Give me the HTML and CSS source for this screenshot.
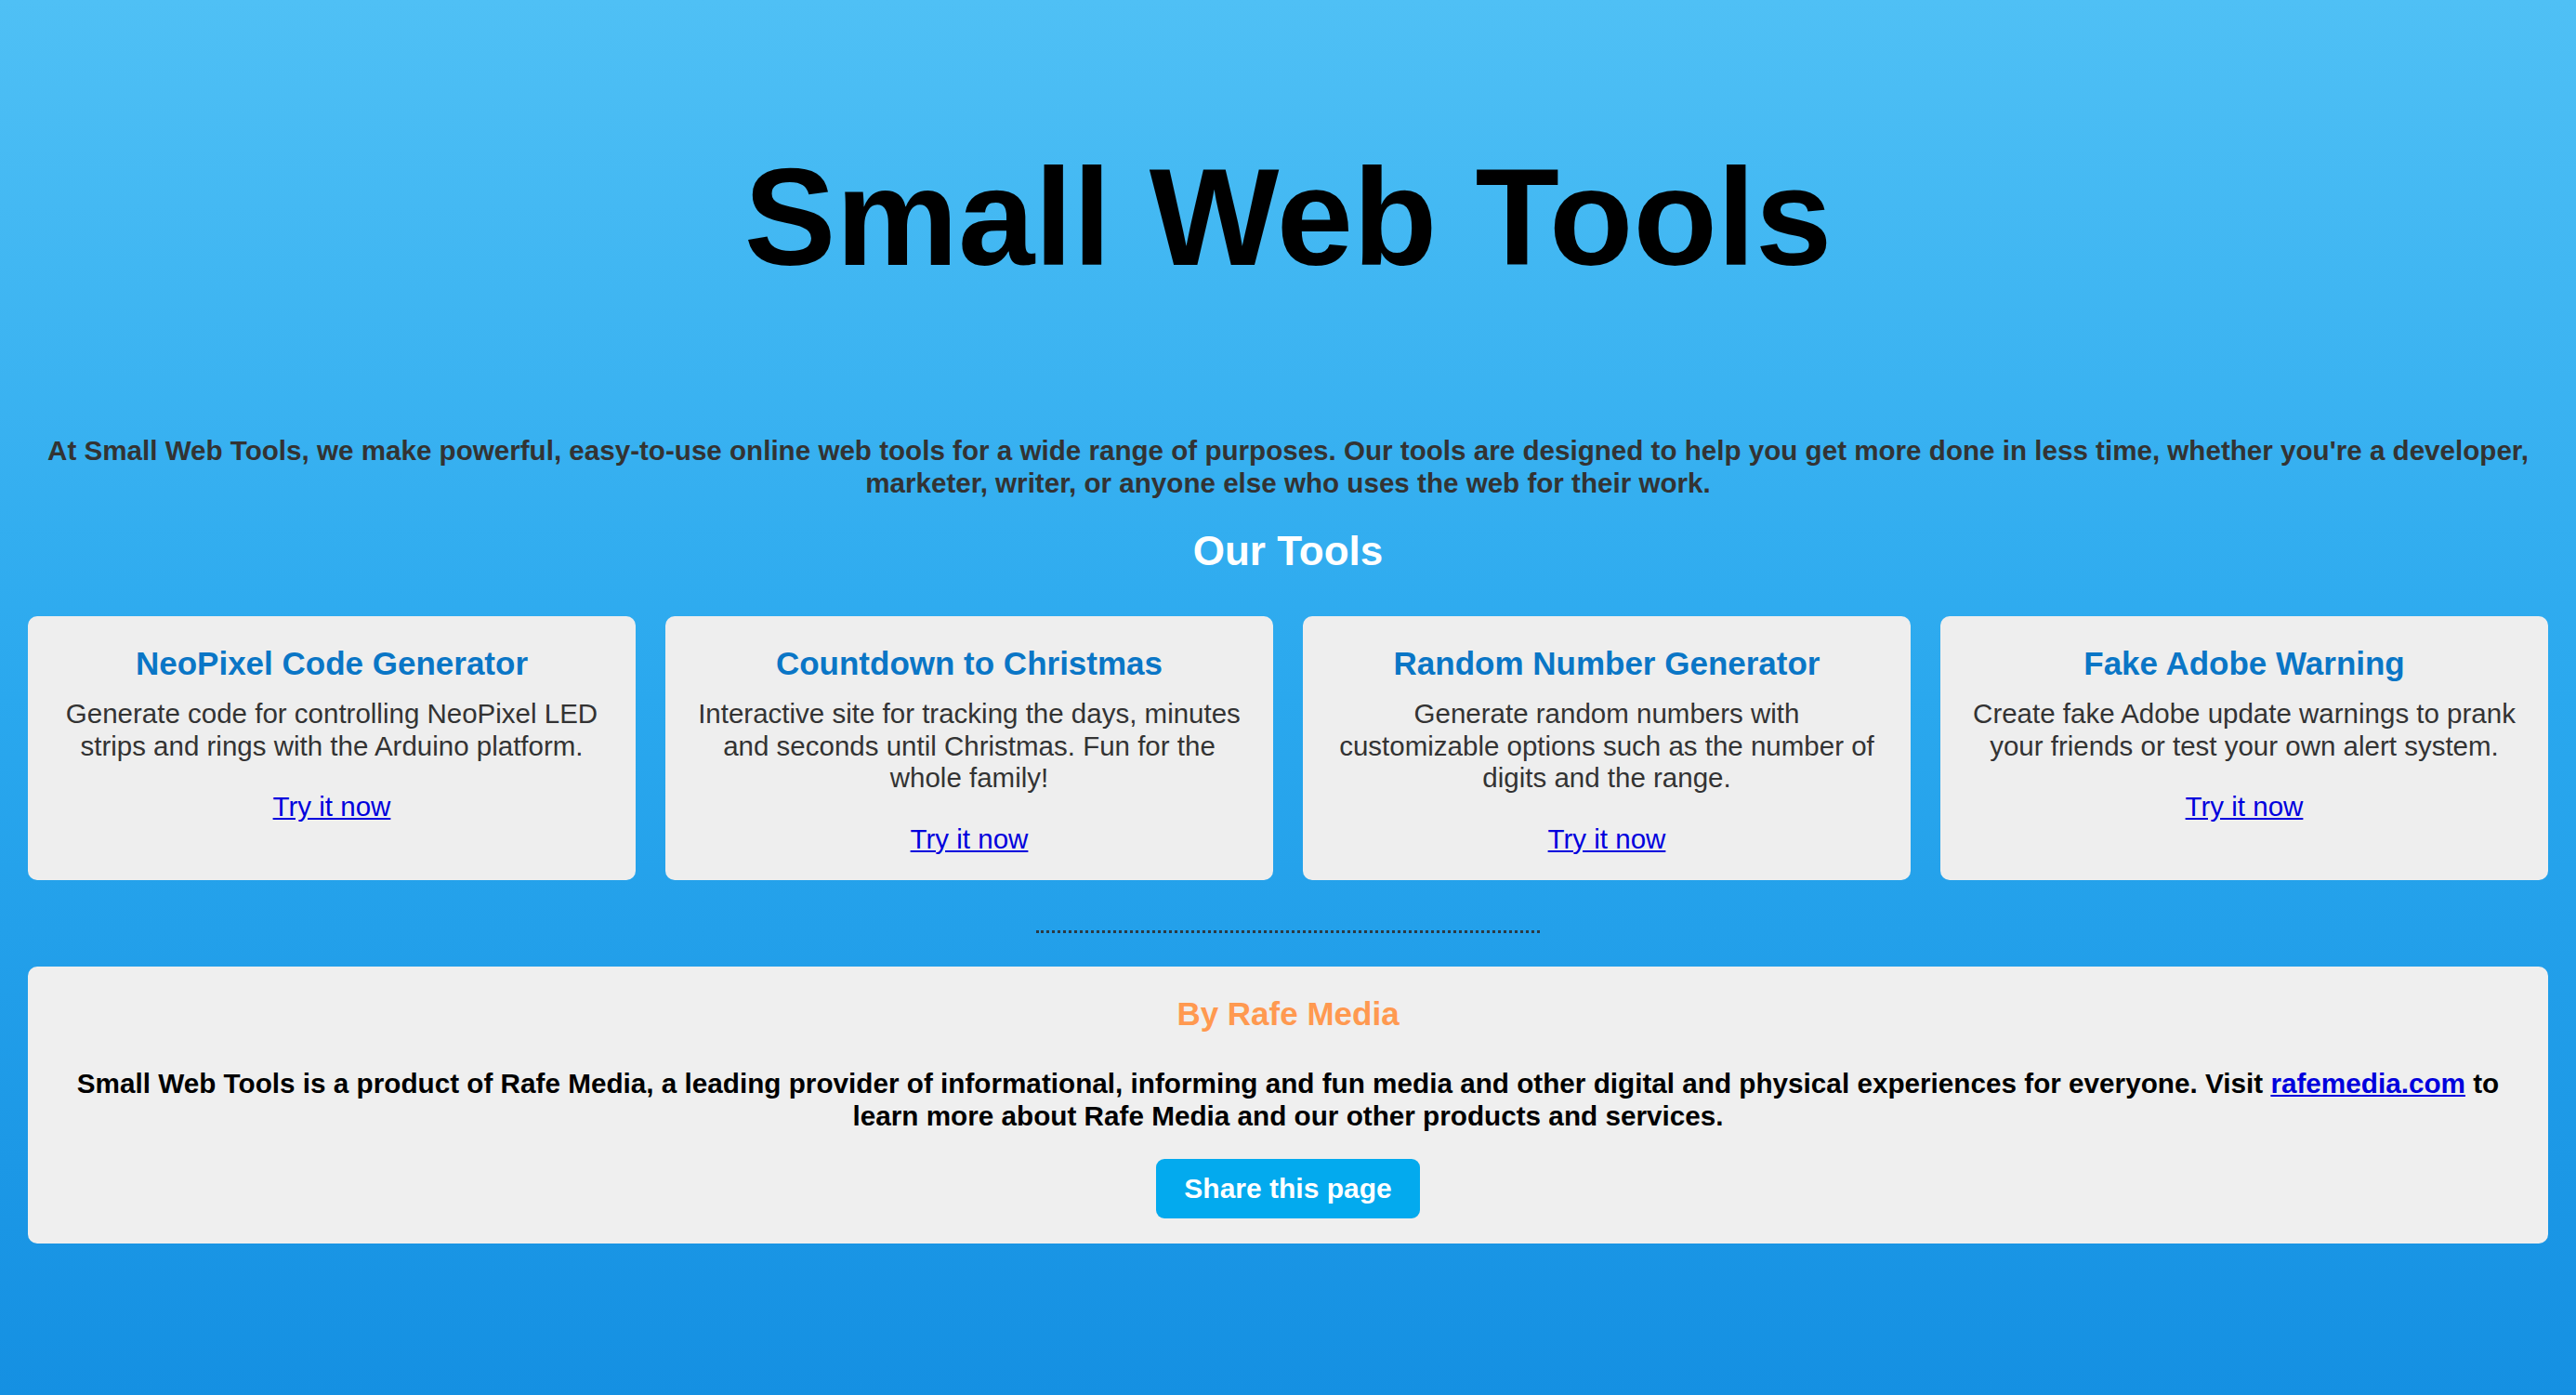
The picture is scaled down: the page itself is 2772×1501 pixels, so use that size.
FILE: index.html
```html
<!DOCTYPE html>
<html lang="en">
<head>
<meta charset="utf-8">
<title>Small Web Tools</title>
<link rel="stylesheet" href="styles.css">
</head>
<body>
<header class="hero">
  <h1 class="hero-title">Small Web Tools</h1>
</header>
<main class="page">
  <p class="intro">At Small Web Tools, we make powerful, easy-to-use online web tools for a wide range of purposes. Our tools are designed to help you get more done in less time, whether you're a developer, marketer, writer, or anyone else who uses the web for their work.</p>
  <h2 class="section-title">Our Tools</h2>
  <div class="tools">
    <article class="tool-card">
      <h3 class="tool-name">NeoPixel Code Generator</h3>
      <p class="tool-desc">Generate code for controlling NeoPixel LED strips and rings with the Arduino platform.</p>
      <p class="tool-link"><a href="#">Try it now</a></p>
    </article>
    <article class="tool-card">
      <h3 class="tool-name">Countdown to Christmas</h3>
      <p class="tool-desc">Interactive site for tracking the days, minutes and seconds until Christmas. Fun for the whole family!</p>
      <p class="tool-link"><a href="#">Try it now</a></p>
    </article>
    <article class="tool-card">
      <h3 class="tool-name">Random Number Generator</h3>
      <p class="tool-desc">Generate random numbers with customizable options such as the number of digits and the range.</p>
      <p class="tool-link"><a href="#">Try it now</a></p>
    </article>
    <article class="tool-card">
      <h3 class="tool-name">Fake Adobe Warning</h3>
      <p class="tool-desc">Create fake Adobe update warnings to prank your friends or test your own alert system.</p>
      <p class="tool-link"><a href="#">Try it now</a></p>
    </article>
  </div>
  <hr class="divider">
  <section class="about">
    <h2 class="about-title">By Rafe Media</h2>
    <p class="about-text">Small Web Tools is a product of Rafe Media, a leading provider of informational, informing and fun media and other digital and physical experiences for everyone. Visit <a href="#">rafemedia.com</a> to learn more about Rafe Media and our other products and services.</p>
    <button class="share-btn" type="button">Share this page</button>
  </section>
</main>
</body>
</html>
```
FILE: styles.css
```css
html {
  height: 100%;
}
body {
  margin: 0;
  min-height: 100%;
  font-family: "Liberation Sans", Arial, Helvetica, sans-serif;
  background: linear-gradient(to bottom, #4fc0f5 0%, #2aa8ee 50%, #1590e2 100%);
  color: #333;
}
.hero {
  text-align: center;
}
.hero-title {
  margin: 0;
  padding: 150px 0 149px;
  font-size: 148px;
  font-weight: 700;
  line-height: 168px;
  color: #000;
}
.page {
  padding: 0 30px;
}
.intro {
  margin: 0 auto;
  font-size: 29.6px;
  line-height: 35px;
  font-weight: 700;
  text-align: center;
  color: #333;
}
.section-title {
  margin: 30px 0 45px;
  font-size: 44px;
  line-height: 51px;
  font-weight: 700;
  text-align: center;
  color: #fff;
}
.tools {
  display: grid;
  grid-template-columns: repeat(4, 1fr);
  gap: 32px;
}
.tool-card {
  background: #eeeeee;
  border-radius: 10px;
  padding: 31px 31px 27px;
  text-align: center;
}
.tool-name {
  margin: 0 0 17px;
  font-size: 35px;
  line-height: 40px;
  font-weight: 700;
  color: #0a76c6;
}
.tool-desc {
  margin: 0 0 31px;
  font-size: 29.5px;
  line-height: 34.5px;
  color: #333;
}
.tool-link {
  margin: 0;
  font-size: 29.5px;
  line-height: 34.5px;
}
.tool-link a {
  color: #0000dd;
}
.divider {
  width: 20%;
  margin: 54px auto 36px;
  border: 0;
  border-top: 3px dotted #2b3a44;
  height: 0;
}
.about {
  background: #efefef;
  border-radius: 10px;
  padding: 31px 30px 27px;
  text-align: center;
}
.about-title {
  margin: 0 0 37px;
  font-size: 35px;
  line-height: 40px;
  font-weight: 700;
  color: #ff9950;
}
.about-text {
  margin: 0 0 29px;
  font-size: 29.7px;
  line-height: 35px;
  font-weight: 700;
  color: #000;
}
.about-text a {
  color: #0000dd;
}
.share-btn {
  display: inline-block;
  margin: 0;
  padding: 15px 30px;
  border: 0;
  border-radius: 9px;
  background: #03aaee;
  color: #fff;
  font-family: "Liberation Sans", Arial, Helvetica, sans-serif;
  font-size: 30px;
  line-height: 34px;
  font-weight: 700;
  cursor: pointer;
}
```
